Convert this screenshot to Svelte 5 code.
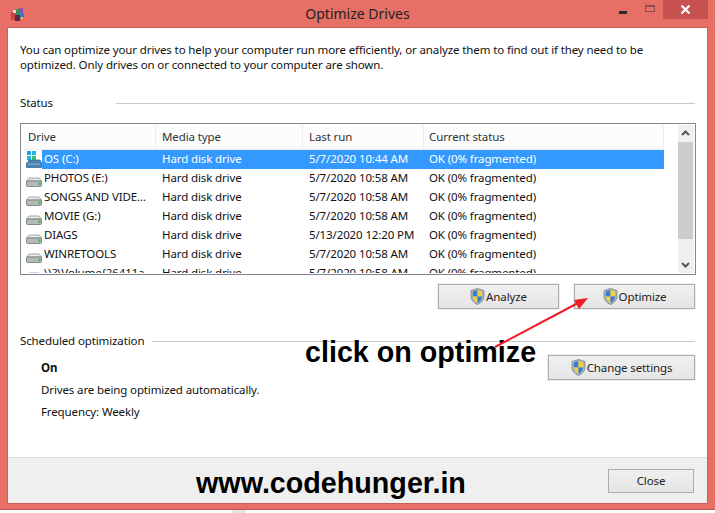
<script>
  const drives = [
    { name: "OS (C:)", last: "5/7/2020 10:44 AM", os: true },
    { name: "PHOTOS (E:)", last: "5/7/2020 10:58 AM" },
    { name: "SONGS AND VIDE...", last: "5/7/2020 10:58 AM" },
    { name: "MOVIE (G:)", last: "5/7/2020 10:58 AM" },
    { name: "DIAGS", last: "5/13/2020 12:20 PM" },
    { name: "WINRETOOLS", last: "5/7/2020 10:58 AM" },
    { name: "\\\\?\\Volume{26411a...", last: "5/7/2020 10:58 AM" }
  ]
</script>

{#snippet shield()}
  <svg class="shield" width="15" height="17" viewBox="0 0 15 17">
    <path d="M7.5 .5 L14 2.500 V8.500 C14 12 11 15 7.500 16.500 C4 15 1 12 1 8.500 V2.500 Z" fill="#aab2b8" stroke="#7d8790" stroke-width=".8" />
    <path d="M7.500 2 V8.500 H3 V3.600 Z" fill="#2f7fd6" />
    <path d="M7.500 2 L12 3.600 V8.500 H7.500 Z" fill="#f5cf3a" />
    <path d="M3 8.500 H7.500 V15 C5.300 13.800 3.200 11.500 3 8.500 Z" fill="#f5cf3a" />
    <path d="M7.500 8.500 H12 C11.800 11.500 9.700 13.800 7.500 15 Z" fill="#2f7fd6" />
  </svg>
{/snippet}

{#snippet disk(os)}
  <svg class="disk" width="16" height="18" viewBox="0 0 16 18">
    {#if os}
      <rect x="1" y="0" width="4" height="4" fill="#1f9fe0" />
      <rect x="6" y="0" width="4" height="4" fill="#1fb5e8" />
      <rect x="1" y="5" width="4" height="4" fill="#1fb5e8" />
      <rect x="6" y="5" width="4" height="4" fill="#2fc46a" />
      <path d="M1.500 12 L3 9 H14 L15.500 12 V16.500 H.500 V12 Z" fill="#4a83b5" stroke="#3b6d98" stroke-width=".8" />
      <rect x="2" y="12.500" width="12" height="1.500" fill="#79a8d0" />
    {:else}
      <path d="M3 8 H13 L15.500 11 H.500 Z" fill="#e9ecec" stroke="#8e9494" stroke-width=".8" />
      <rect x=".5" y="11" width="15" height="5.500" rx="1" fill="#b5baba" stroke="#6f7575" stroke-width=".8" />
      <rect x="12.500" y="12.500" width="2" height="2.500" fill="#3fbf3f" />
    {/if}
  </svg>
{/snippet}

<div class="window">
  <header class="titlebar">
    <svg class="appicon" width="16" height="16" viewBox="0 0 16 16">
      <rect x="1" y="6" width="8" height="8" fill="#c8414b" />
      <rect x="5" y="3" width="5" height="6" fill="#3d8f58" />
      <rect x="9" y="2" width="4" height="5" fill="#8b4fb3" />
      <rect x="9" y="7" width="5" height="5" fill="#2f7fc4" />
      <rect x="5" y="9" width="5" height="6" fill="#5a2a45" />
      <rect x="3" y="4" width="3" height="3" fill="#eddcd0" />
      <rect x="11" y="11" width="2" height="2" fill="#e3c24b" />
    </svg>
    <span class="title">Optimize Drives</span>
    <div class="controls">
      <span class="min"></span>
      <span class="max"></span>
      <span class="close">
        <svg width="11" height="11" viewBox="0 0 11 11">
          <path d="M1.500 1.500 L9.500 9.500 M9.500 1.500 L1.500 9.500" stroke="#fff" stroke-width="2.200" />
        </svg>
      </span>
    </div>
  </header>

  <main class="client">
    <section class="content">
      <p class="intro">You can optimize your drives to help your computer run more efficiently, or analyze them to find out if they need to be optimized. Only drives on or connected to your computer are shown.</p>

      <div class="group status-head">
        <span>Status</span>
        <i></i>
      </div>

      <div class="list">
        <div class="table">
          <div class="row head">
            <span>Drive</span>
            <span>Media type</span>
            <span>Last run</span>
            <span>Current status</span>
          </div>
          <div class="rows">
            {#each drives as d}
              <div class="row" class:selected={d.os}>
                <span class="drive">{@render disk(d.os)}<em>{d.name}</em></span>
                <span>Hard disk drive</span>
                <span>{d.last}</span>
                <span>OK (0% fragmented)</span>
              </div>
            {/each}
          </div>
        </div>
        <div class="scrollbar">
          <svg width="15" height="17" viewBox="0 0 15 17"><path d="M4 10 L7.500 6.500 L11 10" fill="none" stroke="#555" stroke-width="2" /></svg>
          <div class="thumb"></div>
          <svg width="15" height="17" viewBox="0 0 15 17"><path d="M4 7 L7.500 10.500 L11 7" fill="none" stroke="#555" stroke-width="2" /></svg>
        </div>
      </div>

      <div class="actions">
        <button>{@render shield()}Analyze</button>
        <button>{@render shield()}Optimize</button>
      </div>

      <div class="group sched-head">
        <span>Scheduled optimization</span>
        <i></i>
      </div>

      <div class="sched">
        <div class="sched-info">
          <strong>On</strong>
          <p>Drives are being optimized automatically.</p>
          <p>Frequency: Weekly</p>
        </div>
        <button class="change">{@render shield()}Change settings</button>
      </div>
    </section>

    <footer class="footer">
      <button class="closebtn">Close</button>
    </footer>

    <div class="note click">click on optimize</div>
    <div class="note site">www.codehunger.in</div>
  </main>

  <svg class="arrow" width="715" height="513" viewBox="0 0 715 513">
    <path d="M495 347 L578 303" stroke="#ee1c25" stroke-width="2" />
    <path d="M588 298 L574 300 L579 309 Z" fill="#ee1c25" />
  </svg>
</div>

<div class="stub"></div>

<style>
  :global(body) {
    background: #fff;
    overflow: hidden;
  }
  .window {
    position: relative;
    height: 510px;
    box-sizing: border-box;
    background: #e76f66;
    border-bottom: 1px solid #b85a53;
    padding: 0 8px 6px;
    display: flex;
    flex-direction: column;
    font: 11.5px/1 "Noto Sans", sans-serif;
    letter-spacing: -0.12px;
    color: #111;
  }
  .titlebar {
    height: 28px;
    flex: none;
    margin: 0 -8px;
    display: flex;
    align-items: flex-start;
    justify-content: center;
    position: relative;
  }
  .appicon {
    position: absolute;
    left: 10px;
    top: 6px;
  }
  .title {
    font-size: 14px;
    letter-spacing: 0;
    color: #222;
    line-height: 28px;
  }
  .controls {
    position: absolute;
    top: 0;
    right: 7px;
    display: flex;
    align-items: flex-start;
  }
  .min {
    width: 8px;
    height: 3px;
    margin: 11px 18px 0 0;
    background: #2b2b2b;
  }
  .max {
    width: 8px;
    height: 4px;
    margin: 5px 8px 0 0;
    border: 1px solid #8a4f49;
    border-top-width: 2px;
  }
  .close {
    width: 45px;
    height: 19px;
    background: #c75050;
    display: flex;
    align-items: center;
    justify-content: center;
  }
  .client {
    flex: 1;
    position: relative;
    background: #fff;
    display: flex;
    flex-direction: column;
    box-shadow: 0 0 0 1px #c95f57;
  }
  .content {
    flex: 1;
    padding: 14px 12px 0;
  }
  .intro {
    margin: 0;
    line-height: 15px;
    width: 650px;
  }
  .group {
    display: flex;
    align-items: center;
    line-height: 16px;
  }
  .group i {
    flex: 1;
    height: 1px;
    background: #c8c8c8;
  }
  .status-head {
    margin-top: 23px;
  }
  .status-head i {
    margin-left: 63px;
  }
  .sched-head {
    margin-top: 24px;
  }
  .sched-head i {
    margin-left: 8px;
  }
  .list {
    margin-top: 12px;
    height: 152px;
    width: 676px;
    box-sizing: border-box;
    border: 1px solid #82878f;
    display: flex;
    padding: 1px;
  }
  .table {
    flex: 1;
    min-width: 0;
    overflow: hidden;
  }
  .row {
    display: grid;
    grid-template-columns: 134px 147px 121px 240px;
    height: 19px;
    line-height: 18px;
    white-space: nowrap;
  }
  .row span {
    padding-left: 6px;
    overflow: hidden;
  }
  .row span:last-child {
    padding-left: 5px;
  }
  .head {
    height: 24px;
    line-height: 23px;
    background: #fcfcfc;
    border-bottom: 1px solid #e7eef7;
    color: #333;
  }
  .head span {
    border-right: 1px solid #e7eef7;
  }
  .row .drive {
    display: flex;
    align-items: flex-start;
    padding-left: 4px;
    overflow: visible;
  }
  .drive em {
    font-style: normal;
    padding-left: 2px;
  }
  .disk {
    flex: none;
    margin-top: 1px;
  }
  .selected {
    background: linear-gradient(#3399ff, #3399ff) no-repeat 20px 0 / 622px 100%;
    color: #fff;
  }
  .scrollbar {
    width: 16px;
    flex: none;
    margin-left: 14px;
    background: #f0f0f0;
    display: flex;
    flex-direction: column;
    justify-content: space-between;
  }
  .scrollbar svg {
    flex: none;
  }
  .thumb {
    height: 97px;
    margin-right: 1px;
    background: #cdcdcd;
    margin-bottom: auto;
  }
  .actions {
    display: flex;
    justify-content: flex-end;
    gap: 15px;
    margin-top: 9px;
  }
  button {
    font: inherit;
    letter-spacing: inherit;
    color: #222;
    height: 25px;
    padding: 0;
    border: 1px solid #acacac;
    background: linear-gradient(#f0f0f0, #e5e5e5);
    box-shadow: 0 0 0 1px #eee;
    display: flex;
    align-items: center;
    justify-content: center;
    gap: 1px;
  }
  .actions button {
    width: 121px;
  }
  .sched {
    display: flex;
    justify-content: space-between;
    align-items: flex-start;
    padding-left: 21px;
    margin-top: 6px;
  }
  .sched-info {
    padding-top: 4px;
  }
  .sched-info strong {
    display: block;
    line-height: 17px;
  }
  .sched-info p {
    margin: 6px 0 0;
    line-height: 16px;
  }
  .change {
    width: 147px;
  }
  .footer {
    height: 46px;
    flex: none;
    box-sizing: border-box;
    background: #efefef;
    border-top: 1px solid #dfdfdf;
    padding: 11px 13px 0;
    display: flex;
    justify-content: flex-end;
    align-items: flex-start;
  }
  .closebtn {
    width: 86px;
    height: 24px;
    box-shadow: none;
  }
  .note {
    position: absolute;
    font: bold 28.700px "Liberation Sans", sans-serif;
    letter-spacing: 0;
    color: #000;
    white-space: nowrap;
    line-height: 30px;
  }
  .click {
    left: 297px;
    top: 309px;
  }
  .site {
    left: 188px;
    top: 440px;
  }
  .arrow {
    position: absolute;
    left: 0;
    top: 0;
    pointer-events: none;
  }
  .stub {
    width: 14px;
    height: 3px;
    margin-left: 232px;
    background: #e4e4e4;
  }
</style>
